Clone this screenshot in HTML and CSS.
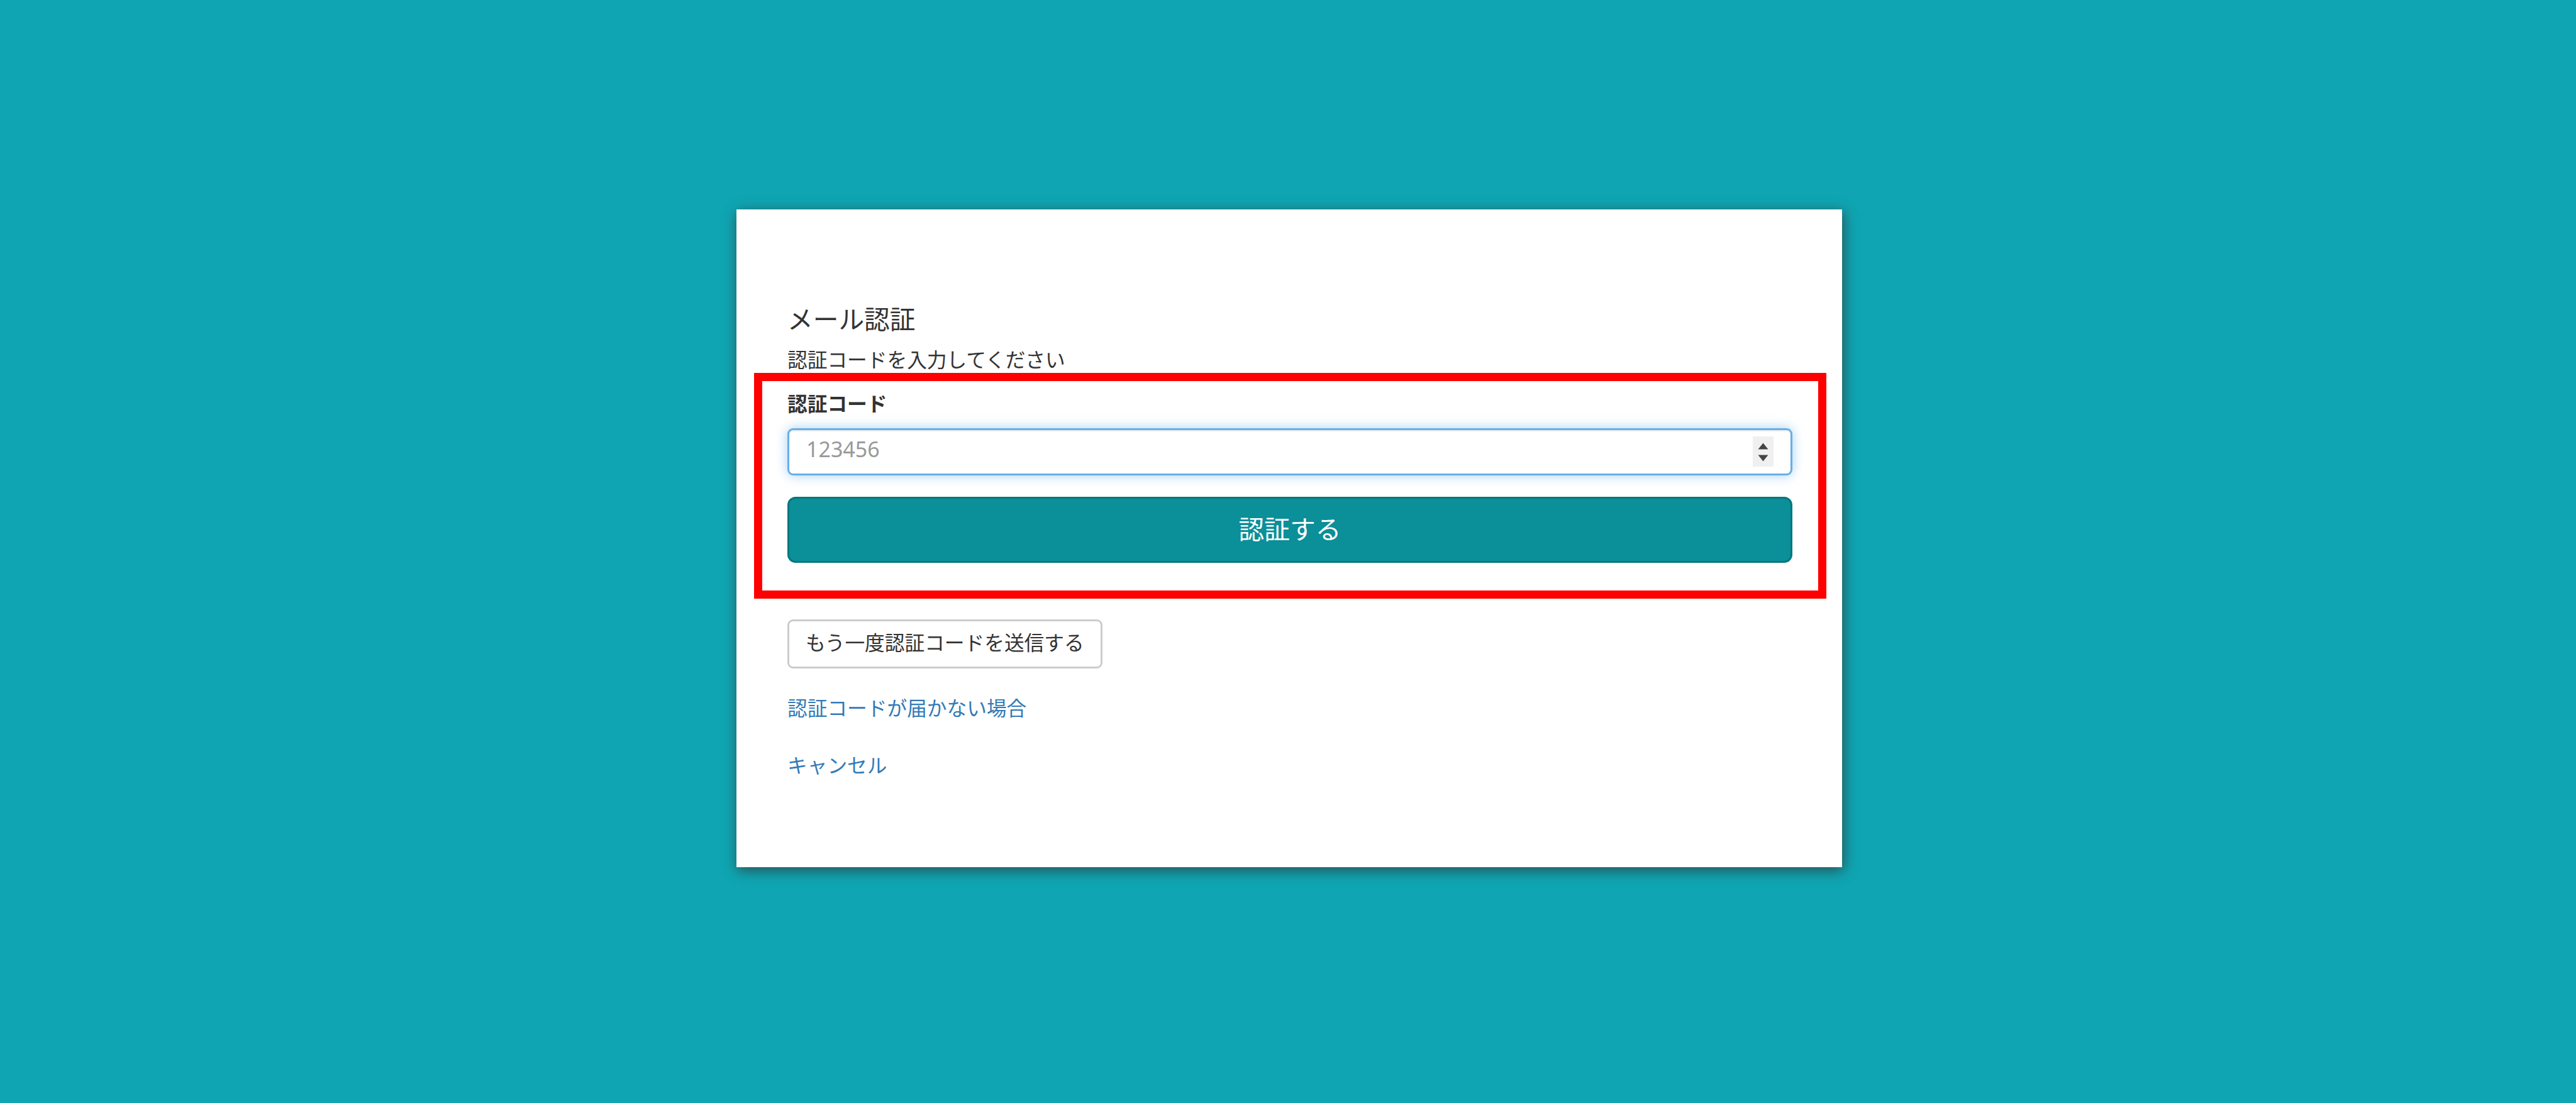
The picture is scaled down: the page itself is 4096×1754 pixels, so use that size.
FILE: index.html
```html
<!DOCTYPE html>
<html lang="ja">
<head>
<meta charset="utf-8">
<title>メール認証</title>
<link rel="stylesheet" href="styles.css">
</head>
<body>
<main class="card">
  <h1 class="title">メール認証</h1>
  <p class="lead">認証コードを入力してください</p>
  <form class="form">
    <label class="label" for="code">認証コード</label>
    <div class="field">
      <input class="input" id="code" type="text" inputmode="numeric" placeholder="123456">
      <span class="spinner">
        <svg class="arrows" viewBox="0 0 33 48" aria-hidden="true">
          <path d="M16.5 10.5 24.5 20.5H8.5Z M8.5 29.5H24.5L16.5 39.5Z"/>
        </svg>
      </span>
    </div>
    <button class="submit" type="button">認証する</button>
  </form>
  <button class="resend" type="button">もう一度認証コードを送信する</button>
  <a class="link" href="#">認証コードが届かない場合</a>
  <a class="link" href="#">キャンセル</a>
  <div class="highlight"></div>
</main>
</body>
</html>
```

FILE: styles.css
```css
* {
  box-sizing: border-box;
}

body {
  margin: 0;
  height: 1754px;
  padding: 333px 0 0 1171px;
  overflow: hidden;
  background: #0fa5b2;
  color: #333;
  font-family: "Noto Sans CJK JP", sans-serif;
  font-size: 31.7px;
}

.card {
  position: relative;
  display: flex;
  flex-direction: column;
  align-items: flex-start;
  width: 1758px;
  height: 1046px;
  padding: 148px 79px 0 81px;
  background: #fff;
  box-shadow: 2px 5px 20px rgba(50, 50, 50, 0.75);
}

.title {
  margin: 0;
  font-size: 40.7px;
  font-weight: 400;
  line-height: 50px;
}

.lead {
  margin: 14px 0 0;
  line-height: 50px;
}

.form {
  display: flex;
  flex-direction: column;
  width: 100%;
  margin-top: 25px;
}

.label {
  font-weight: 700;
  line-height: 40px;
}

.field {
  display: flex;
  align-items: center;
  height: 75px;
  margin-top: 21px;
  padding: 0 27px;
  border: 3px solid #66afe9;
  border-radius: 9px;
  background: #fff;
  box-shadow: inset 0 2px 2px rgba(0, 0, 0, 0.075), 0 0 18px rgba(102, 175, 233, 0.6);
}

.input {
  flex: 1;
  min-width: 0;
  height: 60px;
  padding: 0 0 9px;
  border: 0;
  outline: 0;
  background: transparent;
  color: #555;
  font: 34px "Noto Sans", sans-serif;
}

.input::placeholder {
  color: #999;
}

.spinner {
  width: 33px;
  height: 48px;
  margin-top: -2px;
  background: #f0f0f0;
}

.arrows {
  display: block;
  fill: #444;
}

.submit {
  height: 105px;
  margin-top: 34px;
  padding: 0 0 7px;
  border: 3px solid #03777f;
  border-radius: 13px;
  background: #0b8f99;
  color: #fff;
  font: 40.7px "Noto Sans CJK JP", sans-serif;
}

.resend {
  height: 78px;
  margin-top: 90px;
  padding: 0 26px 9px;
  border: 3px solid #ccc;
  border-radius: 9px;
  background: #fff;
  color: #333;
  font: 31.7px "Noto Sans CJK JP", sans-serif;
}

.link {
  margin-top: 36px;
  color: #337ab7;
  line-height: 50px;
  text-decoration: none;
}

.link + .link {
  margin-top: 41px;
}

/* Frame marking the code entry step, laid over the form */
.highlight {
  position: absolute;
  left: 28px;
  top: 260px;
  width: 1705px;
  height: 359px;
  border: 13px solid #f00;
  pointer-events: none;
}
```
